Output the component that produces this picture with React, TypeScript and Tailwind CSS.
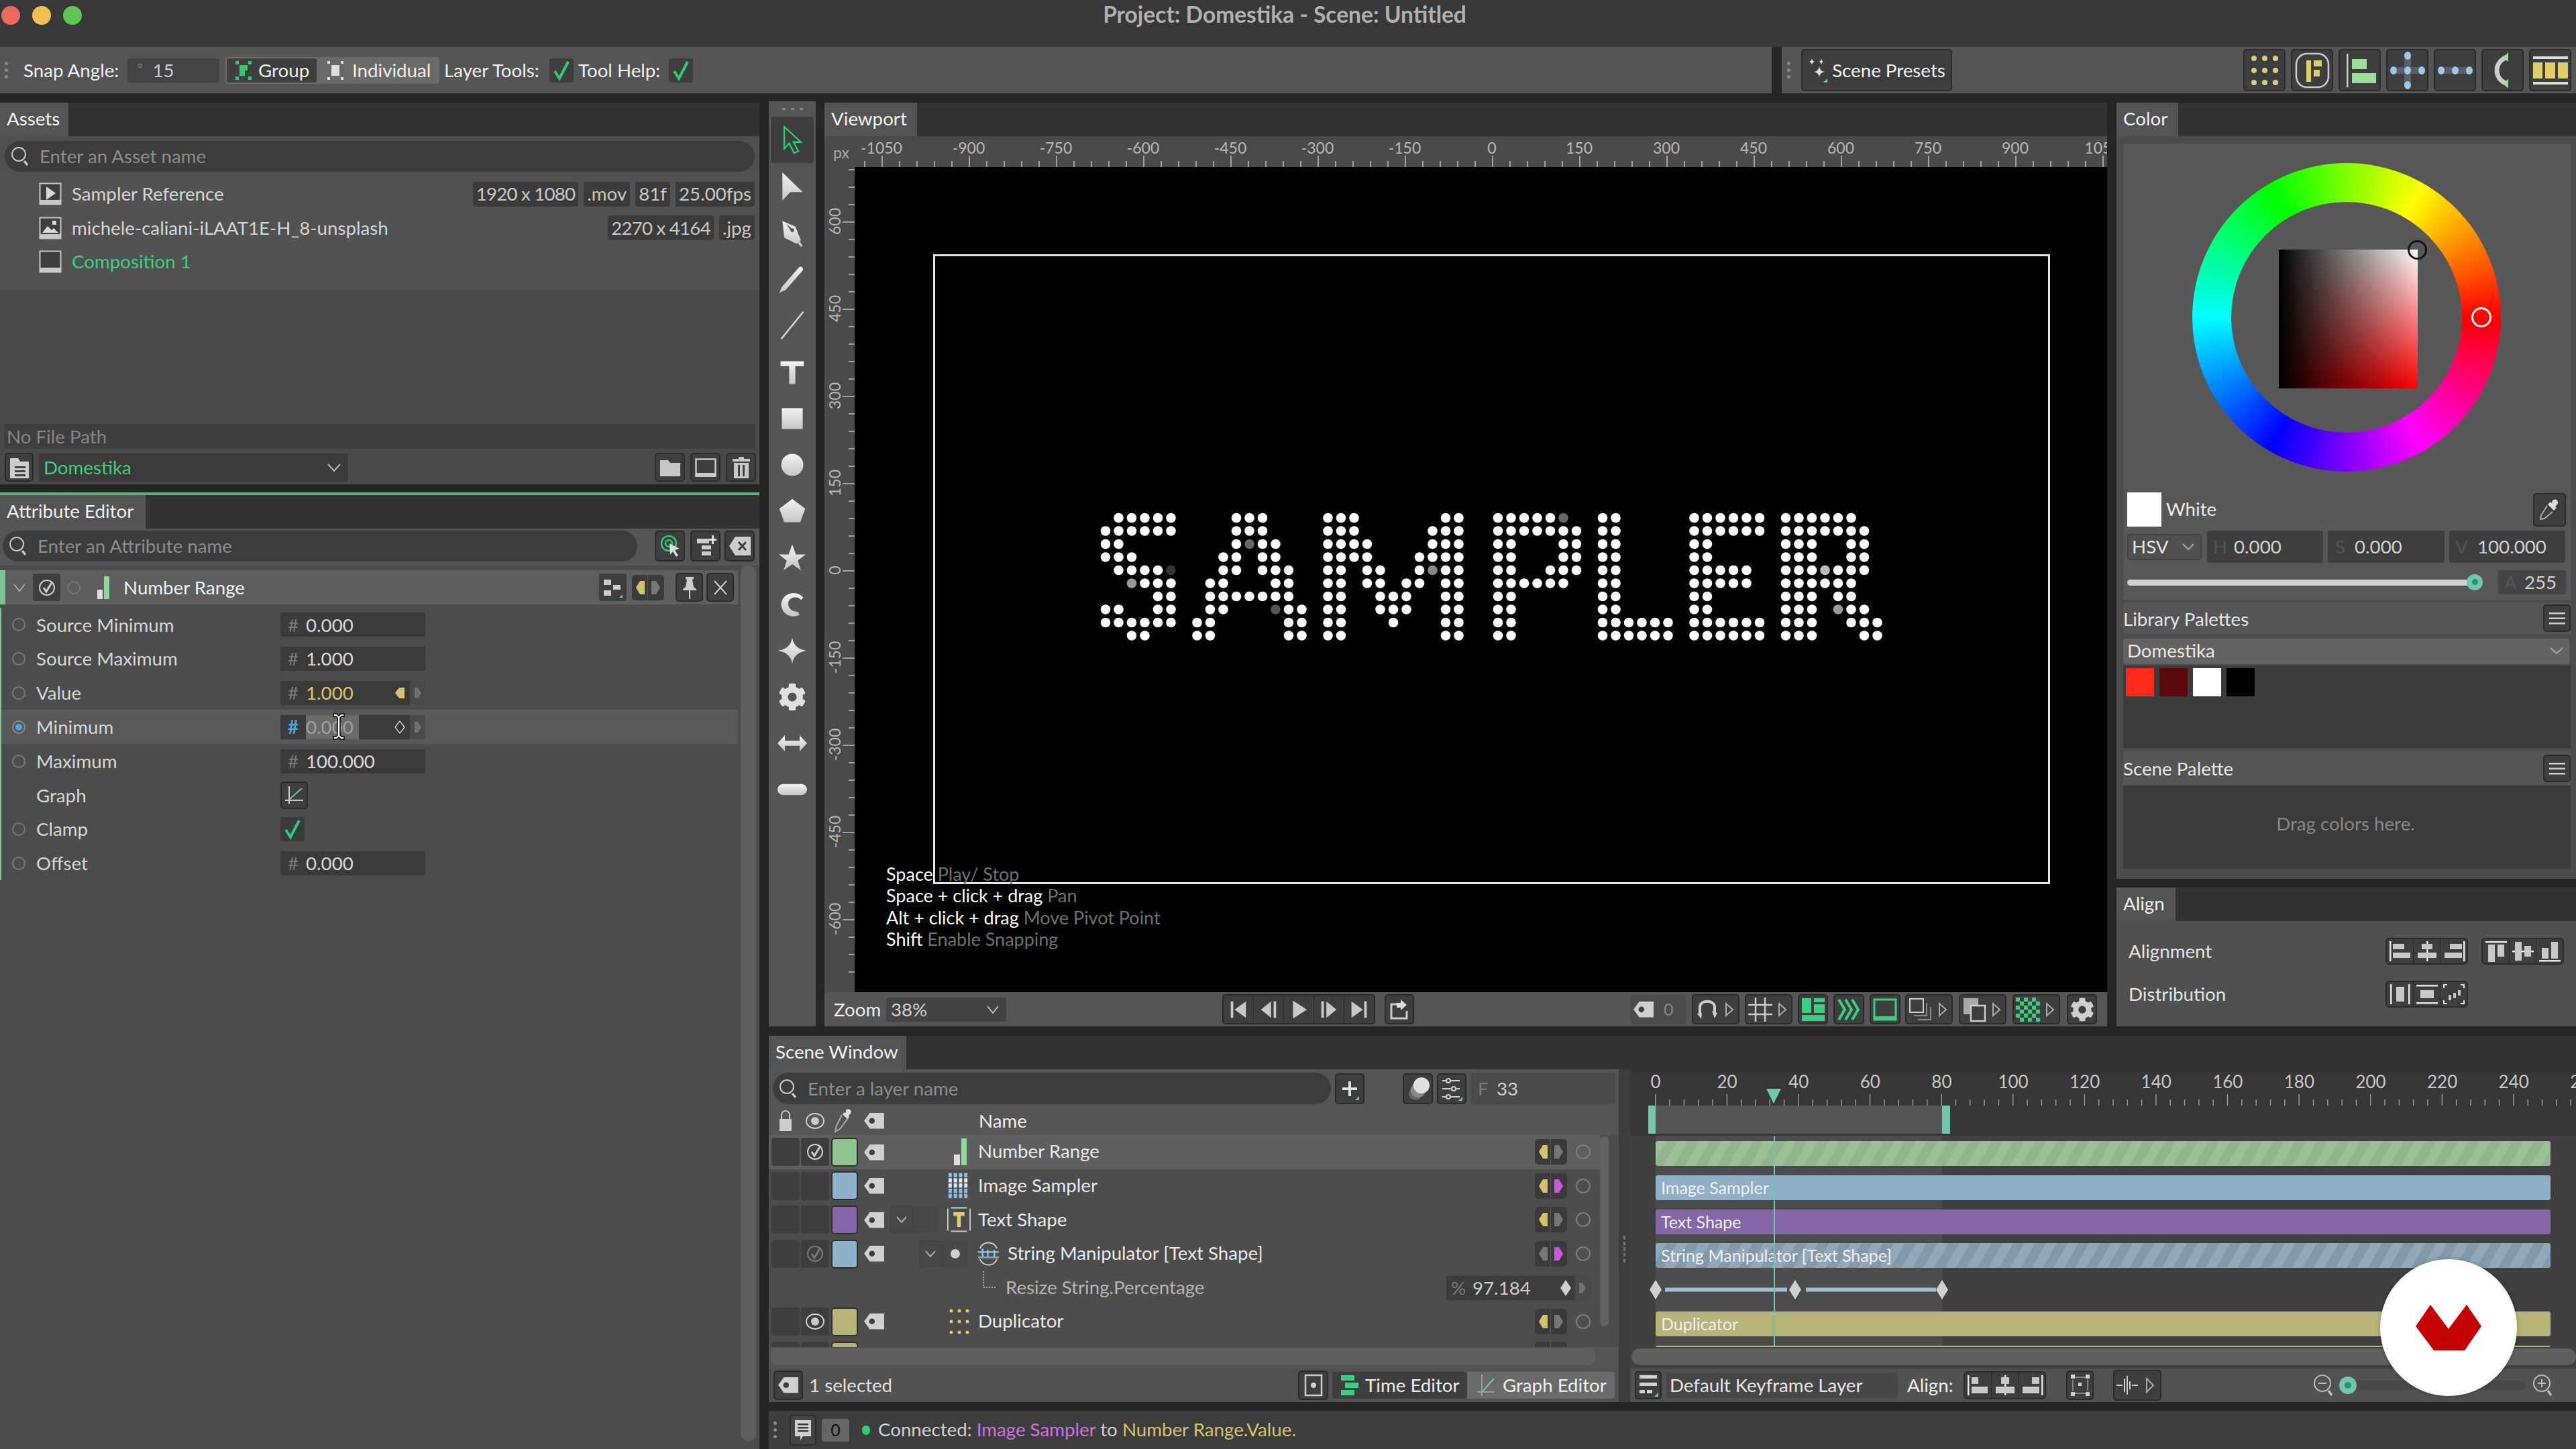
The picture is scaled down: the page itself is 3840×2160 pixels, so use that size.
import React from "react";
import clsx from "clsx";
import { FaCog } from "react-icons/fa";

const GREEN = "#2ecc71";
const TEAL = "#6fc7ad";
const GOLD = "#d4c06f";

function Btn({ className, children }: { className?: string; children?: React.ReactNode }) {
  return (
    <div className={clsx("flex shrink-0 items-center justify-center rounded-[5px] border-2 border-[#2b2b2b] bg-[#3e3e3e]", className)}>
      {children}
    </div>
  );
}

function Tab({ label, width }: { label: string; width: string }) {
  return (
    <div className="flex h-[50px] shrink-0 bg-[#333333]">
      <div className={clsx("flex items-center bg-[#545454] pb-[2px] pl-[10px] text-[27.7px] text-[#f0f0f0]", width)}>{label}</div>
    </div>
  );
}

function SearchIcon() {
  return (
    <svg width="30" height="34" viewBox="0 0 30 34" fill="none" className="shrink-0">
      <circle cx="13" cy="14" r="10" stroke="#c8c8c8" strokeWidth="2" />
      <path d="M21 24l5 6" stroke="#c8c8c8" strokeWidth="3.5" />
    </svg>
  );
}

function Check() {
  return (
    <svg width="30" height="32" viewBox="0 0 30 32" fill="none">
      <path d="M5 17l7 11L25 3" stroke={GREEN} strokeWidth="4" />
    </svg>
  );
}

function TagIcon({ w = 30, c = "#d0d0d0" }: { w?: number; c?: string }) {
  return (
    <svg width={w} height={w * 0.8} viewBox="0 0 30 24">
      <path d="M9 1h20v22H9L1 12z" fill={c} />
      <circle cx="12" cy="12" r="4" fill="#3e3e3e" />
    </svg>
  );
}

function Chip({ children, className }: { children: React.ReactNode; className?: string }) {
  return <div className={clsx("flex h-[37px] items-center rounded-[4px] bg-[#3b3b3b] px-[5px] text-[27.7px] text-[#c8c8c8]", className)}>{children}</div>;
}

function TitleBar() {
  return (
    <div className="grid h-[70px] shrink-0 grid-cols-[1fr_auto_1fr] bg-[#383838] pr-[10px]">
      <div className="flex gap-[18px] pl-[2px] pt-[9px]">
        <div className="h-[28px] w-[28px] rounded-full bg-[#ed6a5e]" />
        <div className="h-[28px] w-[28px] rounded-full bg-[#f4bf4f]" />
        <div className="h-[28px] w-[28px] rounded-full bg-[#61c554]" />
      </div>
      <div className="pt-[2px] text-[33.500px] font-bold leading-[38px] text-[#b0b0b0]">Project: Domestika - Scene: Untitled</div>
      <div />
    </div>
  );
}

function Grip({ className }: { className?: string }) {
  return (
    <div className={clsx("flex flex-col gap-[5px]", className)}>
      <div className="h-[5px] w-[5px] rounded-full bg-[#8a8a8a]" />
      <div className="h-[5px] w-[5px] rounded-full bg-[#8a8a8a]" />
      <div className="h-[5px] w-[5px] rounded-full bg-[#8a8a8a]" />
    </div>
  );
}

function Toolbar() {
  const dot = (x: number, y: number, c: string, r = 4) => <circle key={`${x}-${y}`} cx={x} cy={y} r={r} fill={c} />;
  return (
    <div className="flex h-[69px] shrink-0 items-center bg-[#555555]">
      <Grip className="ml-[7px]" />
      <span className="ml-[23px] w-[141px] shrink-0 whitespace-nowrap text-[27.7px] text-[#f0f0f0]">Snap Angle:</span>
      <div className="ml-[14px] flex h-[36px] w-[137px] items-center rounded-[4px] bg-[#444444] text-[27.7px] text-[#ccc]">
        <span className="ml-[15px] mb-[8px] text-[18px] text-[#888]">°</span>
        <span className="ml-[15px]">15</span>
      </div>
      <div className="ml-[9px] flex h-[40px] w-[319px] items-center rounded-[4px] bg-[#6a6a6a] p-[2px] text-[27.7px] text-[#eee]">
        <div className="flex h-full w-[134px] items-center rounded-[3px] bg-[#3e3e3e]">
          <svg width="28" height="32" viewBox="0 0 28 32" className="ml-[11px]">
            <path d="M8 8h12v8h-4v8H8z" fill={GREEN} />
            <path d="M2 2h5v5H2zM21 2h5v5h-5zM2 25h5v5H2zM21 25h5v5h-5z" fill={GREEN} />
          </svg>
          <span className="ml-[8px]">Group</span>
        </div>
        <svg width="28" height="32" viewBox="0 0 28 32" className="ml-[14px]">
          <rect x="8" y="8" width="12" height="16" fill="#ddd" />
          <path d="M2 2h4v4H2zM22 2h4v4h-4zM2 26h4v4H2zM22 26h4v4h-4z" fill="#ddd" />
        </svg>
        <span className="ml-[11px]">Individual</span>
      </div>
      <span className="ml-[7px] w-[143px] shrink-0 whitespace-nowrap text-[27.7px] text-[#f0f0f0]">Layer Tools:</span>
      <div className="ml-[14px] flex h-[36px] w-[36px] items-center justify-center rounded-[4px] bg-[#3e3e3e]"><Check /></div>
      <span className="ml-[7px] w-[120px] shrink-0 whitespace-nowrap text-[27.7px] text-[#f0f0f0]">Tool Help:</span>
      <div className="ml-[15px] flex h-[36px] w-[36px] items-center justify-center rounded-[4px] bg-[#3e3e3e]"><Check /></div>
      <div className="flex-1" />
      <div className="flex h-full w-[1199px] items-center">
        <div className="h-full w-[15px] bg-[#262626]" />
        <Grip className="ml-[8px]" />
        <Btn className="ml-[16px] h-[63px] w-[225px] gap-[6px] text-[27.7px] text-[#f0f0f0]">
          <svg width="30" height="40" viewBox="0 0 30 40">
            <path d="M17 14q1 7 8 8q-7 1-8 8q-1-7-8-8q7-1 8-8zM6 2q.5 4 4 5q-3.500 1-4 5q-.5-4-4-5q3.500-1 4-5zM20 2q.5 4 3 5q-2.500 1-3 5q-.5-4-3-5q2.500-1 3-5z" fill="#ddd" />
            <path d="M29 32v6h-6z" fill={TEAL} />
          </svg>
          <span>Scene Presets</span>
        </Btn>
        <div className="flex-1" />
        <div className="flex gap-[8px] pr-[7px]">
          <Btn className="h-[63px] w-[63px]">
            <svg width="44" height="48" viewBox="0 0 44 48">
              {[6, 22, 38].flatMap((x) => [6, 24, 42].map((y) => dot(x, y, "#d8cf7c")))}
            </svg>
          </Btn>
          <Btn className="h-[63px] w-[63px]">
            <svg width="56" height="56" viewBox="0 0 56 56" fill="none">
              <rect x="4" y="3" width="48" height="50" rx="16" stroke="#ccc" strokeWidth="2.5" />
              <path d="M19 13h7v32h-7zM30 13h12v9H30zM30 27h9v10h-9z" fill="#dfcf68" />
            </svg>
          </Btn>
          <Btn className="h-[63px] w-[63px]">
            <svg width="50" height="54" viewBox="0 0 50 54">
              <rect x="5" y="2" width="2.500" height="50" fill="#ccc" />
              <rect x="13" y="10" width="22" height="15" fill="#9adf9a" />
              <rect x="13" y="31" width="36" height="15" fill="#9adf9a" />
            </svg>
          </Btn>
          <Btn className="h-[63px] w-[63px]">
            <svg width="56" height="56" viewBox="0 0 56 56">
              <path d="M23 4h10v19h19v10H33v19H23V33H4V23h19z" fill="#5a5f66" />
              {[[28, 6], [7, 28], [28, 28], [49, 28], [28, 50]].map(([x, y]) => <ellipse key={`${x}${y}`} cx={x} cy={y} rx="5" ry="6" fill="#9cc8ef" />)}
            </svg>
          </Btn>
          <Btn className="h-[63px] w-[63px]">
            <svg width="56" height="20" viewBox="0 0 56 20">
              <rect x="4" y="5" width="48" height="10" fill="#5a5f66" />
              {[7, 28, 49].map((x) => <ellipse key={x} cx={x} cy="10" rx="5" ry="6" fill="#9cc8ef" />)}
            </svg>
          </Btn>
          <Btn className="h-[63px] w-[63px]">
            <svg width="40" height="56" viewBox="0 0 40 56" fill="none">
              <path d="M26 8C6 16 6 40 26 48" stroke="#ccc" strokeWidth="7" />
              <path d="M28 1v14l-8-6zM28 55V41l-8 6z" fill="#9adf9a" />
            </svg>
          </Btn>
          <Btn className="h-[63px] w-[63px]">
            <svg width="56" height="42" viewBox="0 0 56 42">
              <path d="M2 0h52v4H2zM2 38h52v4H2z" fill="#ddd" />
              <path d="M2 9h14v24H2zM20 9h15v24H20zM39 9h15v24H39z" fill="#dfcf68" />
            </svg>
          </Btn>
        </div>
      </div>
    </div>
  );
}

function AssetGlyph({ kind }: { kind: "video" | "image" | "comp" }) {
  return (
    <svg width="34" height="34" viewBox="0 0 34 34" fill="none">
      <rect x="1.500" y="1.500" width="31" height="31" fill="#3e3e3e" stroke="#c8c8c8" strokeWidth="2" />
      <rect x="1" y="26" width="32" height="7" fill="#c8c8c8" />
      {kind === "video" && <path d="M11 6l14 10-14 10z" fill="#d8d8d8" />}
      {kind === "image" && <path d="M5 24l8-10 6 6 3-3 7 7zM20 6h6v6h-6z" fill="#d8d8d8" />}
    </svg>
  );
}

function AssetsPanel() {
  return (
    <div className="flex h-[569px] shrink-0 flex-col bg-[#4a4a4a]">
      <Tab label="Assets" width="w-[102px]" />
      <div className="bg-[#505050] pt-[7px] pl-[7px] pr-[7px]">
        <div className="flex h-[46px] items-center rounded-full bg-[#3c3c3c] pl-[8px] text-[27.7px] text-[#8c8c8c]">
          <SearchIcon />
          <span className="ml-[14px]">Enter an Asset name</span>
        </div>
      </div>
      <div className="bg-[#525252] pb-[16px] pt-[8px]">
        <div className="flex h-[50.500px] items-center pl-[58px] pr-[7px]">
          <AssetGlyph kind="video" />
          <span className="ml-[15px] flex-1 text-[27.7px] text-[#d4d4d4]">Sampler Reference</span>
          <div className="flex gap-[8px]">
            <Chip className="tracking-[-0.8px]">1920 x 1080</Chip>
            <Chip>.mov</Chip>
            <Chip>81f</Chip>
            <Chip>25.00fps</Chip>
          </div>
        </div>
        <div className="flex h-[50.500px] items-center pl-[58px] pr-[7px]">
          <AssetGlyph kind="image" />
          <span className="ml-[15px] flex-1 text-[27.7px] text-[#d4d4d4]">michele-caliani-iLAAT1E-H_8-unsplash</span>
          <div className="flex gap-[8px]">
            <Chip className="tracking-[-0.8px]">2270 x 4164</Chip>
            <Chip>.jpg</Chip>
          </div>
        </div>
        <div className="flex h-[50.500px] items-center pl-[58px]">
          <AssetGlyph kind="comp" />
          <span className="ml-[15px] text-[27.7px] text-[#3ecf7f]">Composition 1</span>
        </div>
      </div>
      <div className="flex-1" />
      <div className="mx-[6px] flex h-[37px] items-center bg-[#3f3f3f] pl-[4px] text-[27.7px] text-[#858585]">No File Path</div>
      <div className="flex h-[43px] items-center pl-[7px] pr-[5px] mt-[6px] mb-[4px]">
        <Btn className="h-[43px] w-[43px]">
          <svg width="32" height="36" viewBox="0 0 32 36">
            <path d="M2 4h12l3 5h13v25H2z" fill="#ccc" />
            <path d="M9 16h16v3H9zM9 22h16v3H9zM9 28h16v3H9z" fill="#3e3e3e" />
          </svg>
        </Btn>
        <div className="ml-[8px] flex h-[42px] w-[461px] items-center justify-between rounded-[4px] bg-[#3b3b3b] pl-[7px] pr-[10px] text-[27.7px] text-[#3ecf7f]">
          <span>Domestika</span>
          <svg width="22" height="14" viewBox="0 0 22 14" fill="none"><path d="M2 2l9 10 9-10" stroke="#bbb" strokeWidth="2" /></svg>
        </div>
        <div className="flex-1" />
        <div className="flex gap-[8px]">
          <Btn className="h-[43px] w-[45px]">
            <svg width="32" height="28" viewBox="0 0 32 28"><path d="M1 3h12l3 4h15v20H1z" fill="#c8c8c8" /></svg>
          </Btn>
          <Btn className="h-[43px] w-[45px]">
            <svg width="32" height="28" viewBox="0 0 32 28" fill="none"><rect x="1.500" y="1.500" width="29" height="25" stroke="#c8c8c8" strokeWidth="2.500" /><rect x="1" y="22" width="30" height="6" fill="#c8c8c8" /></svg>
          </Btn>
          <Btn className="h-[43px] w-[45px]">
            <svg width="26" height="32" viewBox="0 0 26 32"><path d="M9 0h8v3h9v4H0V3h9zM2 9h22v23H2z" fill="#c8c8c8" /><path d="M8 12h3v17H8zM15 12h3v17h-3z" fill="#3e3e3e" /></svg>
          </Btn>
        </div>
      </div>
    </div>
  );
}

function Field({ children }: { children: React.ReactNode }) {
  return <div className="flex h-[36px] w-[216px] items-center overflow-hidden rounded-[3px] bg-[#3a3a3a] text-[27.7px] text-[#d8d8d8]">{children}</div>;
}

const Hash = ({ blue }: { blue?: boolean }) => (
  <span className={clsx("ml-[11px] w-[27px] shrink-0", blue ? "font-bold text-[#4aa3e0]" : "text-[#7a7a7a]")}>#</span>
);

const SideKey = () => (
  <div className="flex h-full w-[23px] shrink-0 items-center justify-center bg-[#4a4a4a]">
    <svg width="12" height="18" viewBox="0 0 12 18"><path d="M1 1h5l5 8-5 8H1z" fill="#6f6f6f" /></svg>
  </div>
);

function AttrRow({ label, radio = "off", active, children }: { label: string; radio?: "off" | "on" | "none"; active?: boolean; children: React.ReactNode }) {
  return (
    <div className={clsx("flex h-[50.800px] items-center pl-[16px]", active && "bg-[#585858]")}>
      <div className="flex h-[20px] w-[20px] items-center justify-center">
        {radio !== "none" && (
          <div className={clsx("flex h-[20px] w-[20px] items-center justify-center rounded-full border-2", radio === "on" ? "border-[#8a8a8a]" : "border-[#777]")}>
            {radio === "on" && <div className="h-[10px] w-[10px] rounded-full bg-[#3ea6ec]" />}
          </div>
        )}
      </div>
      <span className="ml-[16px] w-[364px] text-[27.7px] text-[#d6d6d6]">{label}</span>
      {children}
    </div>
  );
}

function AttributePanel() {
  return (
    <div className="flex min-h-0 flex-1 flex-col bg-[#4e4e4e]">
      <Tab label="Attribute Editor" width="w-[217px]" />
      <div className="flex items-center bg-[#555555] pb-[6px] pl-[4px] pr-[7px] pt-[3px]">
        <div className="flex h-[46px] w-[946px] items-center rounded-full bg-[#3c3c3c] pl-[8px] text-[27.7px] text-[#8c8c8c]">
          <SearchIcon />
          <span className="ml-[14px]">Enter an Attribute name</span>
        </div>
        <Btn className="ml-[26px] h-[46px] w-[45px]">
          <svg width="32" height="36" viewBox="0 0 32 36" fill="none">
            <circle cx="14" cy="14" r="11" stroke={GREEN} strokeWidth="2.500" />
            <circle cx="14" cy="14" r="5" stroke={GREEN} strokeWidth="2.500" />
            <path d="M15 14l15 8-7 2 5 8-3 2-5-8-4 5z" fill="#ddd" />
          </svg>
        </Btn>
        <Btn className="ml-[8px] h-[46px] w-[45px]">
          <svg width="32" height="36" viewBox="0 0 32 36">
            <path d="M3 7h18v7H3zM10 17h14v6H10zM10 26h14v6H10z" fill="#ccc" />
            <path d="M25 2h3v5h4v3h-4v5h-3v-5h-4V7h4z" fill="#ddd" />
          </svg>
        </Btn>
        <Btn className="ml-[6px] h-[46px] w-[45px]">
          <svg width="34" height="30" viewBox="0 0 34 30">
            <path d="M10 1h23v28H10L1 15z" fill="#ccc" />
            <path d="M15 9l11 12M26 9L15 21" stroke="#3e3e3e" strokeWidth="3" />
          </svg>
        </Btn>
      </div>
      <div className="flex min-h-0 flex-1 bg-[#4c4c4c]">
        <div className="w-[1100px] pt-[7px]">
          <div className="flex h-[51px] items-center border-l-[8px] border-[#78c98f] bg-[#5e5e5e]">
            <svg width="20" height="14" viewBox="0 0 20 14" fill="none" className="ml-[11px]"><path d="M2 2l8 10 8-10" stroke="#aaa" strokeWidth="2" /></svg>
            <div className="ml-[10px] flex h-[41px] w-[41px] items-center justify-center rounded-[4px] bg-[#3e3e3e]">
              <svg width="26" height="30" viewBox="0 0 26 30" fill="none">
                <circle cx="13" cy="15" r="11" stroke="#ccc" strokeWidth="2" />
                <path d="M8 15l4 6 9-15" stroke="#ccc" strokeWidth="3" />
              </svg>
            </div>
            <div className="ml-[10px] h-[20px] w-[20px] rounded-full border-2 border-[#777]" />
            <svg width="20" height="34" viewBox="0 0 20 34" className="ml-[24px]">
              <rect x="1" y="20" width="8" height="14" fill="#ddd" />
              <rect x="11" y="0" width="8" height="34" fill="#8fd89a" />
            </svg>
            <span className="ml-[20px] text-[27.7px] text-[#f0f0f0]">Number Range</span>
            <div className="flex-1" />
            <div className="flex h-[41px] w-[41px] items-center justify-center rounded-[4px] bg-[#3e3e3e]">
              <svg width="30" height="30" viewBox="0 0 30 30">
                <path d="M1 3h11v8H1zM1 19h11v8H1zM15 11h11v7H15z" fill="#ccc" />
                <path d="M29 25v5h-5z" fill={TEAL} />
              </svg>
            </div>
            <div className="ml-[8px]"><KeyPair right="#777" /></div>
            <Btn className="ml-[17px] h-[43px] w-[41px]">
              <svg width="22" height="34" viewBox="0 0 22 34"><path d="M5 1h12v3l-2 1 2 11 4 3v2H1v-2l4-3 2-11-2-1zM10 21h2v13h-2z" fill="#ccc" /></svg>
            </Btn>
            <Btn className="ml-[5px] mr-[6px] h-[43px] w-[41px]">
              <svg width="22" height="24" viewBox="0 0 22 24" fill="none"><path d="M2 2l18 20M20 2L2 22" stroke="#ccc" strokeWidth="2" /></svg>
            </Btn>
          </div>
          <div className="mt-[5px] border-l-2 border-[#78c98f]">
            <AttrRow label="Source Minimum"><Field><Hash />0.000</Field></AttrRow>
            <AttrRow label="Source Maximum"><Field><Hash />1.000</Field></AttrRow>
            <AttrRow label="Value">
              <Field>
                <Hash />
                <span className="text-[#dcc467]">1.000</span>
                <svg width="16" height="18" viewBox="0 0 16 18" className="ml-auto mr-[7px]"><path d="M1 9l6-8h8v16H7z" fill={GOLD} /></svg>
                <SideKey />
              </Field>
            </AttrRow>
            <AttrRow label="Minimum" radio="on" active>
              <div className="relative">
                <Field>
                  <Hash blue />
                  <span className="bg-[#6a6a6a] pr-[8px] leading-[36px] text-[#a0a0a0]">0.000</span>
                  <svg width="18" height="24" viewBox="0 0 18 24" fill="none" className="ml-auto mr-[6px]"><path d="M9 3l7 9-7 9-7-9z" stroke="#c8c8c8" strokeWidth="1.500" /></svg>
                  <SideKey />
                </Field>
                <svg width="22" height="42" viewBox="0 0 22 42" className="absolute left-[76px] top-[-4px]">
                  <path d="M3 2h5l3 3 3-3h5v4h-4l-2 2v26l2 2h4v4h-5l-3-3-3 3H3v-4h4l2-2V8L7 6H3z" fill="#fff" stroke="#000" strokeWidth="1.500" />
                </svg>
              </div>
            </AttrRow>
            <AttrRow label="Maximum"><Field><Hash />100.000</Field></AttrRow>
            <AttrRow label="Graph" radio="none">
              <Btn className="h-[41px] w-[41px]">
                <svg width="30" height="30" viewBox="0 0 30 30" fill="none">
                  <path d="M7 2v26M1 23h27" stroke="#ccc" strokeWidth="2" />
                  <path d="M8 21L26 5" stroke={TEAL} strokeWidth="2" />
                </svg>
              </Btn>
            </AttrRow>
            <AttrRow label="Clamp">
              <div className="flex h-[36px] w-[36px] items-center justify-center rounded-[3px] bg-[#3a3a3a]"><Check /></div>
            </AttrRow>
            <AttrRow label="Offset"><Field><Hash />0.000</Field></AttrRow>
          </div>
        </div>
        <div className="ml-[4px] mb-[12px] w-[23px] rounded-full bg-[#5e5e5e]" />
      </div>
    </div>
  );
}

function KeyPair({ right = "#777", left = GOLD }: { right?: string; left?: string }) {
  return (
    <div className="flex h-[38px] w-[48px] items-center rounded-[5px] bg-[#3a3a3a]">
      <div className="flex h-full w-1/2 items-center justify-center border-r border-[#555]">
        <svg width="16" height="24" viewBox="0 0 16 24"><path d="M2 12l6-10h7v20H8z" fill={left} /></svg>
      </div>
      <div className="flex h-full w-1/2 items-center justify-center">
        <svg width="16" height="24" viewBox="0 0 16 24"><path d="M14 12L8 2H1v20h7z" fill={right} /></svg>
      </div>
    </div>
  );
}

const toolIcons: React.ReactNode[] = [
  <path key="a" d="M11 2v36l8-9 8 16 7-3-8-15h12z" fill="none" stroke={GREEN} strokeWidth="2.500" />,
  <path key="b" d="M8 1l33 32H21L8 47z" fill="url(#tg)" />,
  <path key="c" fillRule="evenodd" d="M8 5l21 9 9 22-7 6-20-10zM21 20l-7-11 9 8a3 3 0 1 1-2 3zM36 38l5 7-3 2-5-6z" fill="url(#tg)" />,
  <path key="d" d="M3 46l4-9L35 5c3-3 8 1 6 5L13 42zM2 47l2-2 1 1z" fill="url(#tg)" />,
  <path key="e" d="M6 46L42 2" stroke="#ddd" strokeWidth="2.500" fill="none" />,
  <path key="f" d="M5 6h38v8H29v29H19V14H5z" fill="url(#tg)" />,
  <rect key="g" x="7" y="7" width="34" height="34" fill="url(#tg)" />,
  <circle key="h" cx="24" cy="24" r="18" fill="url(#tg)" />,
  <path key="i" d="M24 4l21 16-8 22H11L3 20z" fill="url(#tg)" />,
  <path key="j" d="M24 3l6 16h16L33 29l5 16-14-10-14 10 5-16L2 19h16z" fill="url(#tg)" />,
  <path key="k" d="M42 14A20 19 0 1 0 36 42l-3-5c-16 1-22-19-7-23 6-1 10 1 12 4z" fill="url(#tg)" />,
  <path key="l" d="M24 3q3 18 23 21q-20 3-23 21q-3-18-23-21q20-3 23-21z" fill="url(#tg)" />,
  null,
  <path key="m" d="M0 24l12-13v9h24v-9l12 13-12 13v-9H12v9z" fill="url(#tg)" />,
  <rect key="n" x="0" y="15" width="48" height="18" rx="9" fill="url(#tg)" />,
];

function ToolBox() {
  return (
    <div className="flex w-[70px] shrink-0 flex-col items-center bg-[#555555]">
      <div className="flex h-[23px] items-center gap-[8px]">
        <div className="h-[3px] w-[5px] bg-[#888]" />
        <div className="h-[3px] w-[5px] bg-[#888]" />
        <div className="h-[3px] w-[5px] bg-[#888]" />
      </div>
      <svg className="h-0 w-0">
        <defs>
          <linearGradient id="tg" x1="0" y1="0" x2="0" y2="1">
            <stop offset="0" stopColor="#f4f4f4" />
            <stop offset="1" stopColor="#c4c4c4" />
          </linearGradient>
        </defs>
      </svg>
      <div className="flex w-[64px] flex-col items-center">
        {toolIcons.map((icon, i) => (
          <div key={i} className={clsx("flex h-[69.200px] w-full shrink-0 items-center justify-center rounded-[4px]", i === 0 && "bg-[#3e3e3e]")}>
            {icon ? (
              <svg width="44" height="44" viewBox="0 0 48 48">{icon}</svg>
            ) : (
              <FaCog size={42} color="#e0e0e0" />
            )}
          </div>
        ))}
      </div>
    </div>
  );
}

function HRuler() {
  const labels = [-1050, -900, -750, -600, -450, -300, -150, 0, 150, 300, 450, 600, 750, 900, 1050];
  const ticks = Array.from({ length: 74 }, (_, i) => 59 + i * 26);
  return (
    <svg width="1912" height="46" viewBox="0 0 1912 46" className="block">
      <text x="13" y="33" fontSize="23" fill="#aaa" fontFamily="Lato">px</text>
      {ticks.map((x, i) => (
        <rect key={x} x={x} y={(i - 1) % 5 === 0 ? 29 : 37} width="2" height={(i - 1) % 5 === 0 ? 17 : 9} fill="#a0a0a0" />
      ))}
      {labels.map((v, i) => (
        <text key={v} x={85 + i * 130} y="26" fontSize="23" fill="#b8b8b8" textAnchor="middle" fontFamily="Lato">{v}</text>
      ))}
    </svg>
  );
}

function VRuler() {
  const labels = [600, 450, 300, 150, 0, -150, -300, -450, -600];
  const ticks = Array.from({ length: 47 }, (_, i) => 3 + i * 26);
  return (
    <svg width="45" height="1230" viewBox="0 0 45 1230" className="block shrink-0">
      {ticks.map((y, i) => (
        <rect key={y} x={(i - 3) % 5 === 0 ? 27 : 36} y={y} width={(i - 3) % 5 === 0 ? 18 : 9} height="2" fill="#a0a0a0" />
      ))}
      {labels.map((v, i) => (
        <text key={v} transform={`translate(24 ${81 + i * 130}) rotate(-90)`} fontSize="23" fill="#b8b8b8" textAnchor="middle" fontFamily="Lato">{v}</text>
      ))}
    </svg>
  );
}

const dotRows = [
  "1-5 10-12 17-19 26-27 30-34 35:#666 38-39 45-50 52-57",
  "0-5 10-12 17-19 25-27 30-36 38-39 45-50 52-58",
  "0-1 10 11:#666 12-13 17-20 25-27 30-31 35-36 38-39 45-46 52-54 57-58",
  "0-2 9-10 12-13 17-20 24-27 30-31 35-36 38-39 45-46 52-54 57-58",
  "1-4 5:#333 9-10 12-13 14:#eee 17-18 20-21 24 25:#888 26-27 30-31 34-36 38-39 45-49 52-54 55:#bbb 56-58",
  "2:#999 3-5 8-9 13-14 17-18 20-21 23-24 26-27 30-35 38-39 45-49 52-57",
  "4-5 8-14 17-18 21-23 26-27 30-31 38-39 45-46 52-54 56-57",
  "0-1 4-5 8-9 13:#555 14-15 17-18 21-23 26-27 30-31 38-39 45-46 52-54 56:#999 57-58",
  "0-5 7-8 14-15 17-18 22 26-27 30-31 38-43 45-50 52-54 57-59",
  "2-3 7-8 14-15 17-18 26-27 30-31 38-43 45-50 52-54 58-59",
];

function SamplerDots() {
  const circles: React.ReactNode[] = [];
  dotRows.forEach((row, r) => {
    row.split(" ").forEach((part) => {
      const [range, color] = part.split(":");
      const [from, to] = range.split("-").map(Number);
      for (let c = from; c <= (to ?? from); c++) {
        circles.push(<circle key={`${r}-${c}`} cx={8 + c * 19.5} cy={8 + r * 19.500} r="7.300" fill={color ?? "#fff"} />);
      }
    });
  });
  return (
    <svg width="1190" height="194" viewBox="0 0 1190 194" className="absolute left-[366px] top-[515px]">
      {circles}
    </svg>
  );
}

function Viewport() {
  return (
    <div className="flex w-[1912px] shrink-0 flex-col bg-[#4a4a4a]">
      <Tab label="Viewport" width="w-[138px]" />
      <HRuler />
      <div className="flex h-[1230px] shrink-0">
        <VRuler />
        <div className="relative flex-1 bg-black">
          <div className="absolute left-[117px] top-[130px] h-[939px] w-[1665px] border-[3px] border-[#e4e4e4]" />
          <SamplerDots />
          <div className="absolute left-[47px] top-[1038px] text-[27px] leading-[32.300px] text-white">
            <div>Space <span className="text-[#707070]">Play/ Stop</span></div>
            <div>Space + click + drag <span className="text-[#707070]">Pan</span></div>
            <div>Alt + click + drag <span className="text-[#707070]">Move Pivot Point</span></div>
            <div>Shift <span className="text-[#707070]">Enable Snapping</span></div>
          </div>
        </div>
      </div>
      <div className="flex h-[51px] shrink-0 items-center bg-[#555555]">
        <span className="ml-[14px] w-[69px] shrink-0 text-[27.7px] text-[#eee]">Zoom</span>
        <div className="ml-[9px] flex h-[36px] w-[179px] items-center justify-between rounded-[4px] bg-[#434343] pl-[7px] pr-[10px] text-[27.7px] text-[#d0d0d0]">
          <span>38%</span>
          <svg width="20" height="14" viewBox="0 0 20 14" fill="none"><path d="M2 2l8 10 8-10" stroke="#bbb" strokeWidth="2" /></svg>
        </div>
        <div className="ml-[322px] flex h-[45px] w-[228px] overflow-hidden rounded-[5px] border-2 border-[#2b2b2b] bg-[#3e3e3e]">
          {[
            "M6 5h4v26H6zM30 5v26L12 18z",
            "M6 18L22 5v26zM26 5h4v26h-4z",
            "M9 4l22 14L9 32z",
            "M6 5h4v26H6zM14 5l16 13-16 13z",
            "M6 5l18 13L6 31zM26 5h4v26h-4z",
          ].map((d) => (
            <div key={d} className="flex flex-1 items-center justify-center border-r border-[#2b2b2b] last:border-r-0">
              <svg width="34" height="34" viewBox="0 0 36 36"><path d={d} fill="#c8c8c8" /></svg>
            </div>
          ))}
        </div>
        <Btn className="ml-[14px] h-[45px] w-[44px]">
          <svg width="32" height="32" viewBox="0 0 32 32" fill="none">
            <path d="M14 8H4v21h23V18" stroke="#ccc" strokeWidth="3" />
            <path d="M18 1l9 8-9 8v-4h-6V6h6z" fill="#ddd" />
          </svg>
        </Btn>
        <div className="ml-[322px] flex h-[44px] w-[83px] items-center rounded-[4px] bg-[#4c4c4c] pl-[4px]">
          <TagIcon w={32} />
          <span className="ml-[14px] text-[25px] text-[#888]">0</span>
        </div>
        <BarBtn className="ml-[9px] w-[71px]" arrow>
          <svg width="32" height="36" viewBox="0 0 32 36" fill="none"><path d="M5 24V14C5 3 27 3 27 14v8" stroke="#ccc" strokeWidth="4" /><path d="M23 20l8 3-4 8zM1 24l7-1-1 9z" fill="#ccc" /></svg>
        </BarBtn>
        <BarBtn className="ml-[8px] w-[71px]" arrow>
          <svg width="38" height="38" viewBox="0 0 38 38" fill="none"><path d="M12 1v36M26 1v36M1 12h36M1 26h36" stroke="#ccc" strokeWidth="2.500" /></svg>
        </BarBtn>
        <BarBtn className="ml-[8px] w-[45px]">
          <svg width="36" height="36" viewBox="0 0 36 36"><path d="M1 1h14v22H1zM1 26h34v9H1zM19 1h16v6H19zM19 10h16v13H19z" fill="#38d07f" /></svg>
        </BarBtn>
        <BarBtn className="ml-[8px] w-[46px]">
          <svg width="36" height="34" viewBox="0 0 36 34" fill="none"><path d="M3 2l9 15-9 15M13 2l9 15-9 15M23 2l9 15-9 15" stroke="#38d07f" strokeWidth="4" /></svg>
        </BarBtn>
        <BarBtn className="ml-[8px] w-[46px]">
          <svg width="36" height="34" viewBox="0 0 36 34" fill="none"><rect x="2" y="2" width="32" height="30" stroke="#38d07f" strokeWidth="3" /><rect x="1" y="27" width="34" height="6" fill="#38d07f" /></svg>
        </BarBtn>
        <BarBtn className="ml-[7px] w-[71px]" arrow>
          <svg width="36" height="36" viewBox="0 0 36 36" fill="none"><rect x="2" y="2" width="20" height="20" stroke="#ccc" strokeWidth="2" /><path d="M27 8v19H8M33 14v19H14" stroke="#888" strokeWidth="2" /></svg>
        </BarBtn>
        <BarBtn className="ml-[9px] w-[71px]" arrow>
          <svg width="36" height="38" viewBox="0 0 36 38" fill="none"><rect x="2" y="2" width="22" height="24" fill="#aaa" /><rect x="13" y="13" width="21" height="23" fill="#3e3e3e" stroke="#ccc" strokeWidth="2.500" /></svg>
        </BarBtn>
        <BarBtn className="ml-[9px] w-[71px]" arrow>
          <svg width="36" height="36" viewBox="0 0 36 36">
            {Array.from({ length: 36 }, (_, i) => ((i % 6) + Math.floor(i / 6)) % 2 === 0 && (
              <rect key={i} x={(i % 6) * 6} y={Math.floor(i / 6) * 6} width="6" height="6" fill="#38d07f" />
            ))}
          </svg>
        </BarBtn>
        <BarBtn className="ml-[10px] w-[45px]">
          <FaCog size={36} color="#cfcfcf" />
        </BarBtn>
      </div>
    </div>
  );
}

function BarBtn({ className, arrow, children }: { className: string; arrow?: boolean; children: React.ReactNode }) {
  return (
    <Btn className={clsx("h-[45px] shrink-0 justify-start", className)}>
      <div className="flex w-[42px] shrink-0 items-center justify-center">{children}</div>
      {arrow && (
        <svg width="14" height="22" viewBox="0 0 14 22" fill="none" className="ml-[5px]"><path d="M2 2l10 9-10 9z" stroke="#aaa" strokeWidth="2" /></svg>
      )}
    </Btn>
  );
}

function AlignIcon({ d, line }: { d: string; line?: string }) {
  return (
    <div className="flex flex-1 items-center justify-center border-r border-[#2b2b2b] last:border-r-0">
      <svg width="36" height="34" viewBox="0 0 36 34">
        {line && <path d={line} fill="#e4e4e4" />}
        <path d={d} fill="#c8c8c8" />
      </svg>
    </div>
  );
}

function MenuBtn() {
  return (
    <Btn className="h-[41px] w-[41px]">
      <svg width="26" height="20" viewBox="0 0 26 20"><path d="M1 1h24v2.500H1zM1 8.500h24V11H1zM1 16h24v2.500H1z" fill="#d0d0d0" /></svg>
    </Btn>
  );
}

function ColorPanel() {
  return (
    <div className="flex h-[1157px] shrink-0 flex-col bg-[#4c4c4c]">
      <Tab label="Color" width="w-[92px]" />
      <div className="ml-[10px] mr-[8px] mt-[11px] h-[680px] shrink-0 bg-[#575757]">
        <div className="relative ml-[103px] mt-[29px] flex h-[460px] w-[460px] items-center justify-center rounded-full bg-[conic-gradient(from_90deg,#ff0000,#ff00ff,#0000ff,#00ffff,#00ff00,#ffff00,#ff0000)]">
          <div className="flex h-[344px] w-[344px] items-center justify-center rounded-full bg-[#575757] pl-[4px] pt-[4px]">
            <div className="relative h-[207px] w-[207px] bg-[linear-gradient(to_right,#000000,transparent),linear-gradient(to_bottom,#ffffff,#ff0000)]">
              <div className="absolute right-[-14px] top-[-14px] h-[29px] w-[29px] rounded-full border-[3px] border-[#151515]" />
            </div>
          </div>
          <div className="absolute left-[416px] top-[215px] h-[30px] w-[30px] rounded-full border-[3px] border-white" />
        </div>
        <div className="ml-[6px] mr-[7px] mt-[31px] flex items-center">
          <div className="h-[51px] w-[51px] bg-white" />
          <span className="ml-[7px] mb-[2px] text-[27.7px] text-[#e8e8e8]">White</span>
          <div className="flex-1" />
          <Btn className="h-[50px] w-[49px]">
            <svg width="32" height="34" viewBox="0 0 32 34">
              <path d="M20 3a4.500 4.500 0 0 1 7 6l-3 3 2 2-4 4-9-9 4-4 2 2z" fill="#ddd" />
              <path d="M12 11L3 25l-1 6 6-1 12-10" fill="none" stroke="#aaa" strokeWidth="2" />
            </svg>
          </Btn>
        </div>
        <div className="ml-[6px] mr-[7px] mt-[6px] flex items-center gap-[8px] text-[27.7px] text-[#d0d0d0]">
          <div className="flex h-[39px] w-[111px] items-center justify-between rounded-[4px] border-2 border-[#434343] bg-[#505050] pl-[5px] pr-[8px] text-[#e4e4e4]">
            <span>HSV</span>
            <svg width="20" height="12" viewBox="0 0 20 12" fill="none"><path d="M2 2l8 8 8-8" stroke="#aaa" strokeWidth="2" /></svg>
          </div>
          <div className="flex h-[48px] w-[173px] items-center rounded-[4px] bg-[#3e3e3e]"><span className="ml-[9px] w-[31px] text-[#555]">H</span>0.000</div>
          <div className="-ml-px flex h-[48px] w-[174px] items-center rounded-[4px] bg-[#3e3e3e]"><span className="ml-[11px] w-[29px] text-[#555]">S</span>0.000</div>
          <div className="-ml-px flex h-[48px] w-[173px] items-center rounded-[4px] bg-[#3e3e3e]"><span className="ml-[9px] w-[33px] text-[#555]">V</span>100.000</div>
        </div>
        <div className="ml-[6px] mr-[7px] mt-[11px] flex items-center">
          <div className="relative h-[9px] w-[518px] rounded-full bg-[#cfcfcf]">
            <div className="absolute right-[-12px] top-[-8px] flex h-[24px] w-[24px] items-center justify-center rounded-full bg-[#6fc7ad]">
              <div className="h-[9px] w-[9px] rounded-full bg-[#2e8f74]" />
            </div>
          </div>
          <div className="ml-[35px] flex h-[36px] w-[101px] items-center rounded-[4px] bg-[#444444] text-[27.7px] text-[#d0d0d0]">
            <span className="ml-[9px] w-[30px] text-[#555]">A</span>255
          </div>
        </div>
      </div>
      <div className="ml-[10px] mr-[8px] mt-[4px] flex h-[47px] shrink-0 items-center justify-between bg-[#555555] text-[27.7px] text-[#e4e4e4]">
        <span className="mt-[3px]">Library Palettes</span>
        <MenuBtn />
      </div>
      <div className="ml-[10px] mr-[10px] mt-[7px] flex h-[38px] shrink-0 items-center justify-between rounded-[3px] bg-[#636363] pb-[3px] pl-[6px] pr-[8px] text-[27.7px] text-[#e8e8e8]">
        <span>Domestika</span>
        <svg width="22" height="12" viewBox="0 0 22 12" fill="none"><path d="M2 2l9 8 9-8" stroke="#aaa" strokeWidth="2" /></svg>
      </div>
      <div className="ml-[10px] mr-[8px] mt-[2px] flex h-[123px] shrink-0 items-start gap-[8px] bg-[#3b3b3b] pl-[4px] pt-[4px]">
        <div className="h-[42px] w-[42px] bg-[#ff2a1a]" />
        <div className="h-[42px] w-[42px] bg-[#5a0a0a]" />
        <div className="h-[42px] w-[42px] bg-white" />
        <div className="h-[42px] w-[42px] bg-black" />
      </div>
      <div className="ml-[10px] mr-[8px] mt-[5px] flex h-[51px] shrink-0 items-center justify-between bg-[#555555] text-[27.7px] text-[#e4e4e4]">
        <span>Scene Palette</span>
        <MenuBtn />
      </div>
      <div className="ml-[10px] mr-[8px] flex h-[124px] shrink-0 items-center justify-center bg-[#3b3b3b] pb-[10px] pr-[4px] text-[27.7px] text-[#868686]">Drag colors here.</div>
    </div>
  );
}

function BtnGroup({ children, className }: { children: React.ReactNode; className?: string }) {
  return <div className={clsx("flex h-[40px] w-[123px] overflow-hidden rounded-[6px] border-2 border-[#2b2b2b] bg-[#3e3e3e]", className)}>{children}</div>;
}

function AlignPanel() {
  return (
    <div className="flex flex-1 flex-col bg-[#505050]">
      <Tab label="Align" width="w-[88px]" />
      <div className="mt-[25px] flex h-[40px] items-center pl-[18px]">
        <span className="w-[383px] text-[27.7px] text-[#e4e4e4]">Alignment</span>
        <BtnGroup>
          <AlignIcon line="M2 2h2.500v30H2z" d="M7 6h17v8H7zM7 19h26v8H7z" />
          <AlignIcon line="M17 2h2.500v30H17z" d="M10 6h16v8H10zM4 19h28v8H4z" />
          <AlignIcon line="M32 2h2.500v30H32z" d="M12 6h18v8H12zM4 19h26v8H4z" />
        </BtnGroup>
        <BtnGroup className="ml-[20px]">
          <AlignIcon line="M2 2h32v2.500H2z" d="M6 7h10v26H6zM20 7h10v18H20z" />
          <AlignIcon line="M2 16h32v2.500H2z" d="M6 3h10v28H6zM20 9h10v16H20z" />
          <AlignIcon line="M2 30h32v2.500H2z" d="M6 12h10v16H6zM20 3h10v25H20z" />
        </BtnGroup>
      </div>
      <div className="mt-[24px] flex h-[40px] items-center pl-[18px]">
        <span className="w-[383px] text-[27.7px] text-[#e4e4e4]">Distribution</span>
        <BtnGroup>
          <AlignIcon line="M3 2h2.500v30H3zM30 2h2.500v30H30z" d="M12 6h12v22H12z" />
          <AlignIcon line="M2 3h32v2.500H2zM2 29h32v2.500H2z" d="M8 11h20v12H8z" />
          <AlignIcon line="M2 2h6v2H4v4H2zM28 2h6v6h-2V4h-4zM2 26h2v4h4v2H2zM32 26h2v6h-6v-2h4z" d="M10 18h4v8h-4zM17 15h4v8h-4zM24 11h4v8h-4z" />
        </BtnGroup>
      </div>
    </div>
  );
}

type SceneRow = {
  name: string;
  color: string;
  eye?: "check" | "dim" | "eye";
  selected?: boolean;
  indent: number;
  chevron?: "single" | "dot";
  icon: React.ReactNode;
  right?: string;
  left?: string;
};

const rowsData: SceneRow[] = [
  {
    name: "Number Range", color: "#8fc490", eye: "check", selected: true, indent: 92,
    icon: <svg width="26" height="40" viewBox="0 0 26 40"><rect x="5" y="24" width="9" height="16" fill="#ddd" /><rect x="16" y="0" width="8" height="40" fill="#8fd89a" /></svg>,
  },
  {
    name: "Image Sampler", color: "#8fb1c9", indent: 92, right: "#c85ae0",
    icon: <svg width="36" height="40" viewBox="0 0 36 40">{[2, 10, 18, 26].flatMap((x) => [0, 8, 16, 24, 32].map((y) => <rect key={`${x}-${y}`} x={x} y={y} width="5" height="6.500" fill={(y === 16 || y === 8) ? "#dfe9f2" : "#8cc0e8"} />))}</svg>,
  },
  {
    name: "Text Shape", color: "#8566a8", indent: 92, chevron: "single",
    icon: <svg width="38" height="42" viewBox="0 0 38 42" fill="none"><path d="M1 3v36M37 3v36M6 2h26M6 40h26" stroke="#ccc" strokeWidth="2" /><path d="M10 9h18v6h-6v18h-6V15h-6z" fill="#dfcf68" /></svg>,
  },
  {
    name: "String Manipulator [Text Shape]", color: "#8fb1c9", eye: "dim", indent: 136, chevron: "dot", right: "#c85ae0", left: "#777",
    icon: <svg width="36" height="40" viewBox="0 0 36 40" fill="none"><path d="M5 12C10 0 26 0 31 12M5 28c5 12 21 12 26 0" stroke="#ccc" strokeWidth="2" /><path d="M2 16h32v3H2zM2 24h32v3H2z" fill="#6aa9dc" /><path d="M9 12v13M17 14v11M27 14v11" stroke="#8cc0e8" strokeWidth="2.500" /></svg>,
  },
];

function ColorCell({ c, clip }: { c: string; clip?: boolean }) {
  return <div className={clsx("ml-[3px] w-[40px] rounded-[5px] border-2 border-[#2f2f2f]", clip ? "h-[42px]" : "h-[43px]")} style={{ backgroundColor: c }} />;
}

function CellEye({ kind }: { kind?: "check" | "dim" | "eye" }) {
  return (
    <div className="ml-[2px] flex h-[42px] w-[42px] items-center justify-center rounded-[4px] bg-[#3e3e3e]">
      {(kind === "check" || kind === "dim") && (
        <svg width="26" height="30" viewBox="0 0 26 30" fill="none">
          <circle cx="13" cy="15" r="11" stroke={kind === "check" ? "#ccc" : "#777"} strokeWidth="2" />
          <path d="M8 15l4 6 9-15" stroke={kind === "check" ? "#ccc" : "#777"} strokeWidth="3" />
        </svg>
      )}
      {kind === "eye" && <EyeIcon />}
    </div>
  );
}

function EyeIcon() {
  return (
    <svg width="30" height="26" viewBox="0 0 30 26" fill="none">
      <ellipse cx="15" cy="13" rx="13" ry="11" stroke="#ccc" strokeWidth="2" />
      <circle cx="15" cy="13" r="6" fill="#ccc" />
    </svg>
  );
}

function RightCluster({ left, right }: { left?: string; right?: string }) {
  return (
    <div className="ml-auto flex items-center">
      <KeyPair left={left ?? GOLD} right={right ?? "#777"} />
      <div className="ml-[13px] mr-[14px] h-[22px] w-[22px] rounded-full border-2 border-[#7c7c7c]" />
    </div>
  );
}

function SceneList() {
  return (
    <div className="relative h-[316px] shrink-0 overflow-hidden bg-[#4d4d4d]">
      <div className="w-[1239px]">
        {rowsData.map((r) => (
          <div key={r.name} className={clsx("flex h-[50.600px] items-center pl-[4px]", r.selected && "bg-[#5e5e5e]")}>
            <div className="h-[42px] w-[42px] rounded-[4px] bg-[#3e3e3e]" />
            <CellEye kind={r.eye} />
            <ColorCell c={r.color} />
            <div className="ml-[8px] w-[33px] shrink-0"><TagIcon w={32} /></div>
            <div className="flex shrink-0 items-center" style={{ width: r.indent }}>
              {r.chevron === "single" && (
                <div className="ml-[7px] flex h-[40px] w-[72px] items-center rounded-[4px] bg-[#484848]">
                  <div className="flex h-full w-[34px] items-center justify-center rounded-[4px] border border-[#424242]">
                    <svg width="18" height="12" viewBox="0 0 18 12" fill="none"><path d="M2 2l7 8 7-8" stroke="#aaa" strokeWidth="2" /></svg>
                  </div>
                </div>
              )}
              {r.chevron === "dot" && (
                <div className="ml-[50px] flex h-[40px] w-[72px] items-center rounded-[4px] bg-[#484848]">
                  <div className="flex h-full w-[34px] items-center justify-center rounded-[4px] border border-[#424242]">
                    <svg width="18" height="12" viewBox="0 0 18 12" fill="none"><path d="M2 2l7 8 7-8" stroke="#aaa" strokeWidth="2" /></svg>
                  </div>
                  <div className="ml-[13px] h-[14px] w-[14px] rounded-full bg-[#d0d0d0]" />
                </div>
              )}
            </div>
            <div className="flex w-[35px] shrink-0 justify-center">{r.icon}</div>
            <span className="mb-[2px] ml-[11px] text-[27.7px] text-[#e8e8e8]">{r.name}</span>
            <RightCluster left={r.left} right={r.right} />
          </div>
        ))}
        <div className="flex h-[50.600px] items-center">
          <svg width="24" height="30" viewBox="0 0 24 30" fill="none" className="ml-[318px] mb-[22px]">
            <path d="M2 1v24h20" stroke="#aaa" strokeWidth="2" strokeDasharray="2 2" />
          </svg>
          <span className="ml-[11px] mb-[2px] text-[27.7px] text-[#b4b4b4]">Resize String.Percentage</span>
          <div className="ml-auto mr-[15px] flex h-[36px] w-[214px] items-center overflow-hidden rounded-[4px] bg-[#3c3c3c] text-[27.7px] text-[#cfcfcf]">
            <span className="ml-[7px] w-[32px] text-[#7a7a7a]">%</span>
            <span>97.184</span>
            <svg width="20" height="26" viewBox="0 0 20 26" className="ml-auto mr-[4px]"><path d="M10 1l8 12-8 12-8-12z" fill="#d0d0d0" /></svg>
            <div className="flex h-full w-[22px] items-center justify-center bg-[#4a4a4a]">
              <svg width="12" height="18" viewBox="0 0 12 18"><path d="M1 1h5l5 8-5 8H1z" fill="#6f6f6f" /></svg>
            </div>
          </div>
        </div>
        <div className="flex h-[50.600px] items-center pl-[4px]">
          <div className="h-[42px] w-[42px] rounded-[4px] bg-[#3e3e3e]" />
          <CellEye kind="eye" />
          <ColorCell c="#b8b378" />
          <div className="ml-[8px] w-[33px] shrink-0"><TagIcon w={32} /></div>
          <div className="w-[92px] shrink-0" />
          <div className="flex w-[35px] shrink-0 justify-center">
            <svg width="30" height="40" viewBox="0 0 30 40">
              {[3, 15, 27].flatMap((x) => [4, 20, 36].map((y) => <circle key={`${x}-${y}`} cx={x} cy={y} r="2.500" fill="#dfcf68" />))}
            </svg>
          </div>
          <span className="mb-[2px] ml-[11px] text-[27.7px] text-[#e8e8e8]">Duplicator</span>
          <RightCluster />
        </div>
        <div className="flex h-[50.600px] items-start pl-[4px] pt-[4px]">
          <div className="h-[42px] w-[42px] rounded-[4px] bg-[#3e3e3e]" />
          <div className="ml-[2px] h-[42px] w-[42px] rounded-[4px] bg-[#3e3e3e]" />
          <ColorCell c="#b8b378" clip />
          <div className="ml-auto mr-[49px]"><KeyPair /></div>
        </div>
      </div>
      <div className="absolute right-[15px] top-[2px] h-[283px] w-[13px] rounded-full bg-[#636363]" />
    </div>
  );
}

function SceneLeft() {
  return (
    <div className="flex w-[1267px] shrink-0 flex-col bg-[#555555]">
      <div className="flex h-[53px] shrink-0 items-center pl-[6px] pt-[4px]">
        <div className="flex h-[47px] w-[832px] items-center rounded-full bg-[#3c3c3c] pl-[8px] text-[27.7px] text-[#8c8c8c]">
          <SearchIcon />
          <span className="ml-[14px]">Enter a layer name</span>
        </div>
        <Btn className="ml-[6px] h-[46px] w-[44px]">
          <svg width="30" height="34" viewBox="0 0 30 34"><path d="M13 6h4v9h9v4h-9v9h-4v-9H4v-4h9z" fill="#e0e0e0" /><path d="M29 28v6h-6z" fill={TEAL} /></svg>
        </Btn>
        <Btn className="ml-[57px] h-[46px] w-[45px]">
          <svg width="36" height="38" viewBox="0 0 36 38"><circle cx="14" cy="26" r="10" fill="#666" /><circle cx="18" cy="21" r="11" fill="#8a8a8a" /><circle cx="23" cy="14" r="12" fill="#e0e0e0" /></svg>
        </Btn>
        <Btn className="ml-[6px] h-[46px] w-[44px]">
          <svg width="32" height="36" viewBox="0 0 32 36" fill="none">
            <path d="M2 6h6M14 6h14M2 18h14M22 18h6M2 30h6M14 30h14" stroke="#d0d0d0" strokeWidth="2" />
            <circle cx="11" cy="6" r="3" stroke="#d0d0d0" strokeWidth="2" /><circle cx="19" cy="18" r="3" stroke="#d0d0d0" strokeWidth="2" /><circle cx="11" cy="30" r="3" stroke="#d0d0d0" strokeWidth="2" />
            <path d="M32 30v6h-6z" fill={TEAL} />
          </svg>
        </Btn>
        <div className="ml-[7px] flex h-[47px] w-[215px] items-center rounded-[4px] bg-[#4a4a4a] text-[27.7px] text-[#d0d0d0]">
          <span className="ml-[10px] w-[28px] text-[#777]">F</span>33
        </div>
      </div>
      <div className="flex h-[45px] shrink-0 items-center pl-[14px] pt-[3px] text-[27.7px] text-[#eee]">
        <svg width="22" height="34" viewBox="0 0 22 34" fill="none"><path d="M5 14V8c0-8 12-8 12 0v6" stroke="#ccc" strokeWidth="2" /><rect x="2" y="14" width="18" height="18" fill="#ccc" /></svg>
        <div className="ml-[18px]"><EyeIcon /></div>
        <svg width="30" height="38" viewBox="0 0 30 38" fill="none" className="ml-[13px]">
          <path d="M18 3a4 4 0 0 1 7 5l-3 3 1 2-3 3-7-7 3-3 2 1z" fill="#ddd" /><path d="M12 10L4 26l-2 9 7-4 12-16" stroke="#aaa" strokeWidth="2" />
        </svg>
        <div className="ml-[14px]"><TagIcon w={32} /></div>
        <span className="ml-[140px]">Name</span>
      </div>
      <SceneList />
      <div className="mt-[2px] ml-[2px] h-[25px] w-[1230px] shrink-0 rounded-full bg-[#5f5f5f]" />
      <div className="mt-[5px] flex h-[50px] shrink-0 items-center bg-[#525252] pl-[7px]">
        <Btn className="h-[44px] w-[44px]"><TagIcon w={32} /></Btn>
        <span className="ml-[9px] text-[27.7px] text-[#e0e0e0]">1 selected</span>
        <div className="flex-1" />
        <Btn className="h-[44px] w-[45px]">
          <svg width="28" height="34" viewBox="0 0 28 34" fill="none"><rect x="2" y="2" width="24" height="30" stroke="#ccc" strokeWidth="2.500" /><circle cx="14" cy="17" r="4" fill="#ccc" /></svg>
        </Btn>
        <div className="mx-[6px] flex h-[40px] w-[421px] items-center rounded-[4px] bg-[#6a6a6a] text-[27.7px] text-[#eee]">
          <div className="flex h-full w-[201px] items-center rounded-[3px] bg-[#3e3e3e]">
            <svg width="30" height="32" viewBox="0 0 30 32" className="ml-[11px]"><path d="M2 1h20v8H2zM8 12h20v8H8zM2 23h20v8H2z" fill="#38d07f" /></svg>
            <span className="ml-[8px]">Time Editor</span>
          </div>
          <svg width="28" height="36" viewBox="0 0 28 36" fill="none" className="ml-[14px]"><path d="M8 2v32M1 28h26" stroke="#aaa" strokeWidth="1.500" /><path d="M9 27L26 8" stroke={TEAL} strokeWidth="2" /></svg>
          <span className="ml-[11px]">Graph Editor</span>
        </div>
      </div>
    </div>
  );
}

function TimeRuler() {
  const labels = Array.from({ length: 14 }, (_, i) => i * 20);
  const ticks = Array.from({ length: 71 }, (_, i) => i);
  return (
    <svg width="1410" height="54" viewBox="0 0 1410 54" className="block shrink-0">
      {ticks.map((i) => (
        <rect key={i} x={37 + i * 21.32} y={i % 5 === 0 ? 37 : 45} width="1.500" height={i % 5 === 0 ? 17 : 9} fill="#9a9a9a" />
      ))}
      {labels.map((v, i) => (
        <text key={v} x={38 + i * 106.6} y="28" fontSize="26" fill="#c8c8c8" textAnchor="middle" fontFamily="Lato">{v}</text>
      ))}
      <path d="M203 29h22l-11 22z" fill={TEAL} />
    </svg>
  );
}

function TrackBar({ label, className }: { label?: string; className: string }) {
  return (
    <div className={clsx("ml-[38px] flex h-[37px] w-[1334px] shrink-0 items-center rounded-[3px] pl-[8px] text-[25px] text-[#f0f0f0]", className)}>{label}</div>
  );
}

function SceneRight() {
  return (
    <div className="flex min-w-0 flex-1 flex-col bg-[#404040]">
      <div className="relative h-[99px] shrink-0 bg-[#363636]">
        <TimeRuler />
        <div className="ml-[27px] flex h-[42px] w-[450px] bg-[#555555]">
          <div className="h-full w-[11px] bg-[#6fc7ad]" />
          <div className="flex-1" />
          <div className="h-full w-[12px] bg-[#6fc7ad]" />
        </div>
      </div>
      <div className="relative flex h-[315px] shrink-0 flex-col gap-[13.800px] overflow-hidden pt-[8px]">
        <div className="absolute bottom-0 left-[38px] top-0 w-[427px] bg-[#4c4c4c]" />
        <TrackBar className="relative bg-[repeating-linear-gradient(120deg,#9cbf97_0,#9cbf97_14px,#93b58e_14px,#93b58e_28px)]" />
        <TrackBar label="Image Sampler" className="relative bg-[#8fb0c6]" />
        <TrackBar label="Text Shape" className="relative bg-[#8566a8]" />
        <TrackBar label="String Manipulator [Text Shape]" className="relative bg-[repeating-linear-gradient(120deg,#8fa9bb_0,#8fa9bb_14px,#8299ab_14px,#8299ab_28px)]" />
        <div className="relative ml-[28px] flex h-[37px] w-[450px] shrink-0 items-center">
          <svg width="450" height="37" viewBox="0 0 450 37">
            <path d="M24 15.500h182v6H24zM234 15.500h194v6H234z" fill="#9cc0d6" />
            <path d="M10 4l9 14.500-9 14.500-9-14.500zM218 4l9 14.500-9 14.500-9-14.500zM437 4l9 14.500-9 14.500-9-14.500z" fill="#d0d0d0" />
          </svg>
        </div>
        <TrackBar label="Duplicator" className="relative bg-[#b8b378]" />
        <TrackBar className="relative bg-[#b8b378]" />
        <div className="absolute bottom-0 left-[214px] top-0 w-[1.500px] bg-[#6fc7ad]" />
      </div>
      <div className="ml-[2px] mt-[2px] h-[25px] shrink-0 rounded-full bg-[#5f5f5f]" />
      <div className="mt-[5px] flex h-[50px] shrink-0 items-center bg-[#525252] pl-[7px]">
        <Btn className="h-[42px] w-[40px]">
          <svg width="30" height="34" viewBox="0 0 30 34"><path d="M2 2h26v5H2zM2 13h26v5H2zM2 24h8v5H2zM13 24h8v5h-8z" fill="#d0d0d0" /><path d="M30 28v6h-6z" fill={TEAL} /></svg>
        </Btn>
        <div className="ml-[7px] flex h-[38px] w-[345px] items-center rounded-[4px] bg-[#474747] pl-[5px] text-[27.7px] text-[#e4e4e4]">Default Keyframe Layer</div>
        <span className="ml-[14px] w-[72px] shrink-0 text-[27.7px] text-[#eee]">Align:</span>
        <BtnGroup className="ml-[12px] h-[42px] w-[121px]">
          <AlignIcon line="M2 2h2.500v30H2z" d="M8 5h10v10H8zM8 19h24v10H8z" />
          <AlignIcon line="M17 2h2.500v30H17z" d="M12 5h12v10H12zM4 19h28v10H4z" />
          <AlignIcon line="M32 2h2.500v30H32z" d="M18 5h11v10H18zM4 19h25v10H4z" />
        </BtnGroup>
        <Btn className="ml-[30px] h-[44px] w-[41px]">
          <svg width="30" height="36" viewBox="0 0 30 36" fill="none"><path d="M4 6h22M4 30h22M4 10v16M26 10v16" stroke="#999" strokeWidth="1.500" /><path d="M1 2h6v6H1zM23 2h6v6h-6zM1 28h6v6H1zM23 28h6v6h-6zM12 14h5v5h-5z" fill="#d0d0d0" /></svg>
        </Btn>
        <Btn className="ml-[29px] h-[46px] w-[72px] justify-start">
          <svg width="34" height="32" viewBox="0 0 34 32" fill="none" className="ml-[2px]"><path d="M1 16h9M24 16h9" stroke="#ccc" strokeWidth="2" /><path d="M13 6v20M17 2v28M21 10v12" stroke="#ccc" strokeWidth="2" /></svg>
          <svg width="14" height="24" viewBox="0 0 14 24" fill="none" className="ml-[10px]"><path d="M2 2l10 10L2 22z" stroke="#aaa" strokeWidth="2" /></svg>
        </Btn>
        <svg width="32" height="36" viewBox="0 0 32 36" fill="none" className="ml-[225px]">
          <circle cx="15" cy="15" r="12" stroke="#bbb" strokeWidth="2" /><path d="M9 15h12" stroke="#bbb" strokeWidth="2" /><path d="M24 26l5 7" stroke="#bbb" strokeWidth="3.500" />
        </svg>
        <div className="relative ml-[8px] h-[14px] w-[278px] rounded-full bg-[#494949]">
          <div className="absolute left-0 top-[-6px] flex h-[26px] w-[26px] items-center justify-center rounded-full bg-[#6fc7ad]">
            <div className="h-[10px] w-[10px] rounded-full bg-[#2e8f74]" />
          </div>
        </div>
        <svg width="32" height="36" viewBox="0 0 32 36" fill="none" className="ml-[9px]">
          <circle cx="15" cy="15" r="12" stroke="#bbb" strokeWidth="2" /><path d="M9 15h12M15 9v12" stroke="#bbb" strokeWidth="2" /><path d="M24 26l5 7" stroke="#bbb" strokeWidth="3.500" />
        </svg>
      </div>
    </div>
  );
}

function SceneWindow() {
  return (
    <div className="flex h-[546px] shrink-0 flex-col">
      <Tab label="Scene Window" width="w-[205px]" />
      <div className="flex min-h-0 flex-1 bg-[#3d3d3d]">
        <SceneLeft />
        <div className="flex w-[17px] shrink-0 items-center justify-center">
          <div className="mt-[40px] h-[40px] w-[3px] border-l-[3px] border-dashed border-[#707070]" />
        </div>
        <SceneRight />
      </div>
    </div>
  );
}

function StatusBar() {
  return (
    <div className="mt-[13px] flex h-[57px] shrink-0 items-center bg-[#3d3d3d] pl-[7px] text-[27.7px]">
      <Grip />
      <Btn className="ml-[19px] h-[46px] w-[40px] bg-[#444444]">
        <svg width="28" height="34" viewBox="0 0 28 34"><path d="M2 2h24v24H14l-4 6v-6H2z" fill="#d0d0d0" /><path d="M6 7h16v2.500H6zM6 12h16v2.500H6zM6 17h16v2.500H6z" fill="#3e3e3e" /></svg>
      </Btn>
      <div className="ml-[8px] flex h-[34px] w-[41px] items-center justify-center rounded-[4px] bg-[#666] text-[25px] text-[#111]">0</div>
      <div className="ml-[19px] h-[14px] w-[12px] rounded-full bg-[#2ecc71]" />
      <span className="mb-[2px] ml-[12px] text-[#cfcfcf]">
        Connected: <span className="text-[#cf6fe0]">Image Sampler</span> to <span className="text-[#d4c06f]">Number Range.Value.</span>
      </span>
    </div>
  );
}

export default function App() {
  return (
    <div className="relative flex h-[2160px] w-[3840px] flex-col overflow-hidden bg-[#262626] font-[Lato,sans-serif] text-[27.7px] leading-none">
      <TitleBar />
      <Toolbar />
      <div className="flex min-h-0 flex-1">
        <div className="flex w-[1132px] shrink-0 flex-col pt-[14px]">
          <AssetsPanel />
          <div className="mt-[12px] h-[4px] shrink-0 bg-[#59b57e]" />
          <AttributePanel />
        </div>
        <div className="ml-[14px] flex min-w-0 flex-1 flex-col pt-[12px]">
          <div className="flex h-[1379px] shrink-0">
            <ToolBox />
            <div className="ml-[13px] mt-[2px] flex">
              <Viewport />
            </div>
            <div className="ml-[14px] mt-[2px] flex min-w-0 flex-1 flex-col">
              <ColorPanel />
              <div className="mt-[13px] flex flex-1 flex-col">
                <AlignPanel />
              </div>
            </div>
          </div>
          <div className="mt-[14px]">
            <SceneWindow />
          </div>
          <StatusBar />
        </div>
      </div>
      <div className="absolute left-[3548px] top-[1877px] flex h-[204px] w-[204px] items-center justify-center rounded-full bg-white shadow-[0_0_6px_rgba(0,0,0,0.25)]">
        <svg width="98" height="68" viewBox="0 0 98 68">
          <path d="M22 0l27 36L76 0l22 32-25 36H27L0 32z" fill="#c40000" />
        </svg>
      </div>
    </div>
  );
}
